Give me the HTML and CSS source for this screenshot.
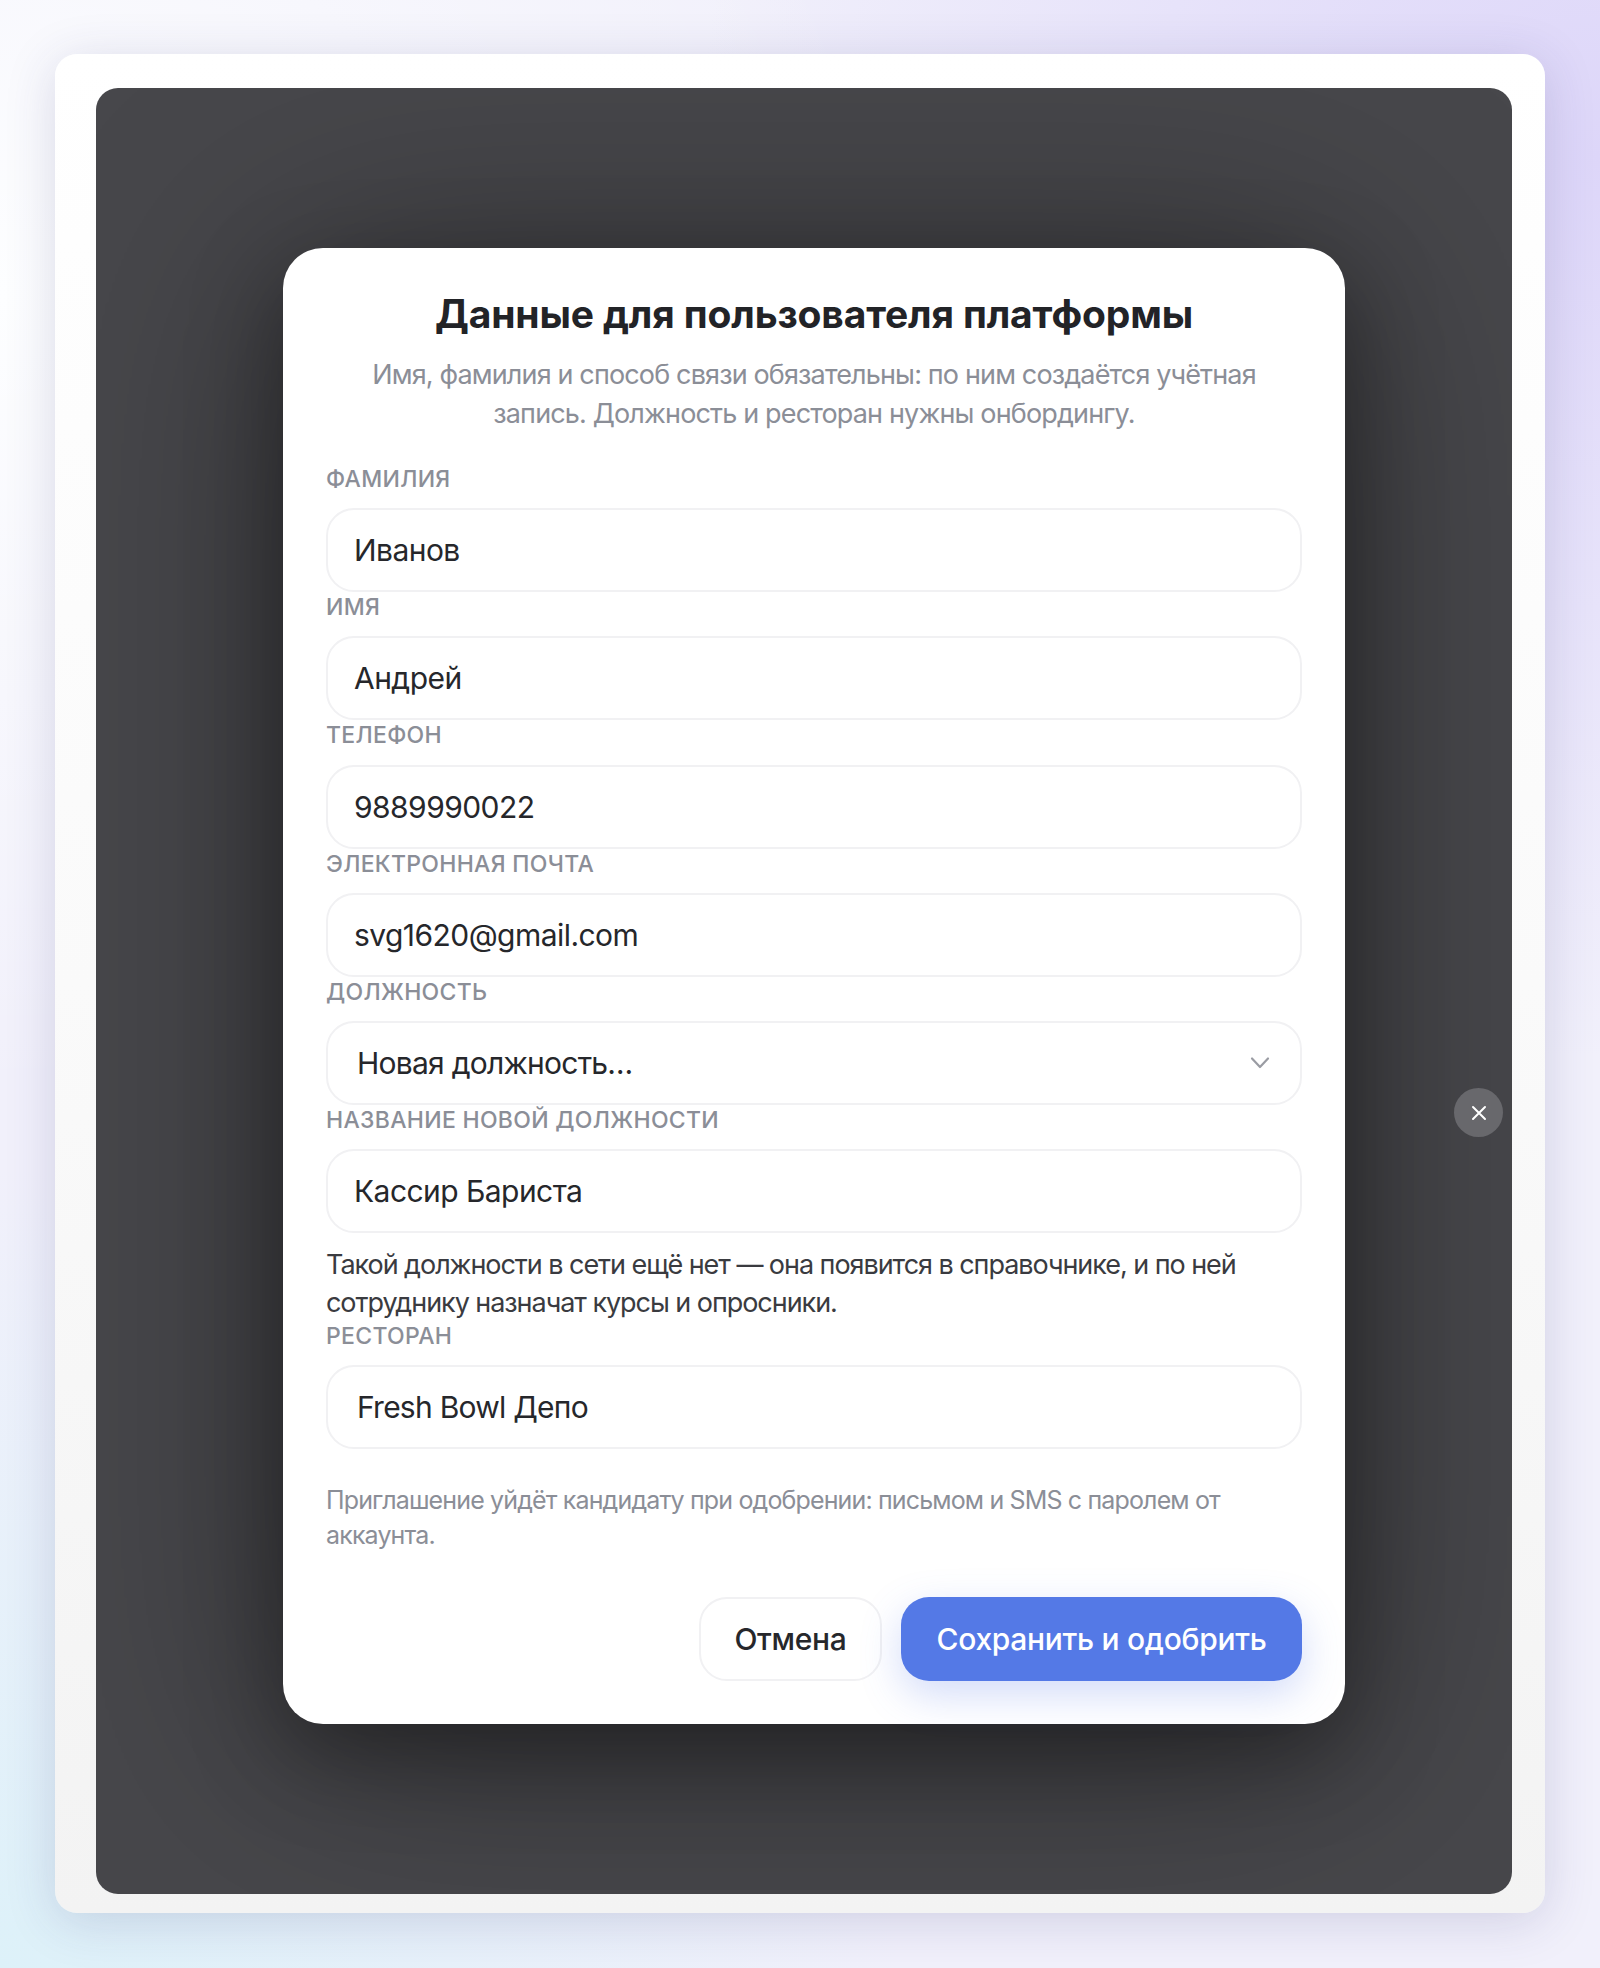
FILE: index.html
```html
<!DOCTYPE html>
<html lang="ru">

<head>
    <meta charset="UTF-8">
    <meta name="viewport" content="width=device-width, initial-scale=1.0">
    <title>Данные для пользователя платформы</title>
    <link rel="stylesheet" href="styles.css">
</head>

<body>
    <div class="card">
        <div class="overlay">
            <div class="modal">
                <h1>Данные для пользователя платформы</h1>
                <p class="lead">Имя, фамилия и способ связи обязательны: по ним создаётся учётная запись. Должность и ресторан нужны онбордингу.</p>

                <div class="label">Фамилия</div>
                <div class="field">Иванов</div>
                <div class="label">Имя</div>
                <div class="field">Андрей</div>
                <div class="label">Телефон</div>
                <div class="field">9889990022</div>
                <div class="label">Электронная почта</div>
                <div class="field">svg1620@gmail.com</div>
                <div class="label">Должность</div>
                <div class="field select">
                    Новая должность…
                    <svg class="chevron" viewBox="0 0 20 20" width="20" height="20" fill="none" stroke="#9a9ca3" stroke-width="2.2" stroke-linecap="round" stroke-linejoin="round">
                        <path d="M2 5.5l8 8.5 8-8.5" />
                    </svg>
                </div>
                <div class="label">Название новой должности</div>
                <div class="field">Кассир Бариста</div>
                <p class="hint">Такой должности в сети ещё нет — она появится в справочнике, и по ней сотруднику назначат курсы и опросники.</p>
                <div class="label">Ресторан</div>
                <div class="field select">Fresh Bowl Депо</div>
                <p class="note">Приглашение уйдёт кандидату при одобрении: письмом и SMS с паролем от аккаунта.</p>

                <div class="actions">
                    <button class="btn cancel">Отмена</button>
                    <button class="btn save">Сохранить и одобрить</button>
                </div>
            </div>

            <button class="close">
                <svg viewBox="0 0 20 20" width="20" height="20" fill="none" stroke="#ffffff" stroke-width="2" stroke-linecap="round">
                    <path d="M4 4l12 12M16 4L4 16" />
                </svg>
            </button>
        </div>
    </div>
</body>

</html>
```

FILE: styles.css
```css
* {
    margin: 0px;
    padding: 0px;
    box-sizing: border-box;
}

body {
    height: 1968px;
    padding: 54px 55px;
    font-family: Inter, "Noto Sans", sans-serif;
    color: #26272b;
    background-color: #f1f0fb;
    background-image:
        radial-gradient(900px 900px at 100% 8%, #ddd6f9 0%, rgba(221, 214, 249, 0) 100%),
        radial-gradient(900px 800px at 0% 100%, #ddf1f9 0%, rgba(221, 241, 249, 0) 100%),
        radial-gradient(900px 800px at 0% 15%, #fdfeff 0%, rgba(253, 254, 255, 0) 100%);
}

.card {
    height: 1859px;
    padding: 34px 33px 19px 41px;
    border-radius: 22px;
    background: linear-gradient(180deg, #ffffff 0%, #fafafa 50%, #f3f3f3 100%);
    box-shadow: 0 8px 50px rgba(50, 50, 110, 0.17);
}

.overlay {
    position: relative;
    height: 1806px;
    padding: 160px 167px 0 187px;
    border-radius: 22px;
    background-color: #47474b;
    overflow: hidden;
}

.modal {
    height: 1476px;
    padding: 40px 43px 0;
    border-radius: 40px;
    background-color: #ffffff;
    box-shadow: 0 30px 90px rgba(0, 0, 0, 0.35), 0 20px 240px rgba(0, 0, 0, 0.4);
}

h1 {
    font-size: 39px;
    line-height: 52px;
    font-weight: 700;
    letter-spacing: -0.15px;
    text-align: center;
    color: #222327;
}

.lead {
    margin-top: 15px;
    padding: 0 30px;
    font-size: 27px;
    line-height: 39px;
    letter-spacing: -0.85px;
    text-align: center;
    color: #8b8e97;
}

.lead + .label {
    margin-top: 31px;
}

.label {
    height: 30px;
    margin-bottom: 14.2px;
    font-size: 23px;
    line-height: 30px;
    font-weight: 500;
    letter-spacing: 0.3px;
    text-transform: uppercase;
    color: #8b8e97;
}

.field {
    position: relative;
    display: flex;
    align-items: center;
    height: 84px;
    padding: 0 26px;
    font-size: 30px;
    letter-spacing: -0.55px;
    border: 2px solid #f1f1f3;
    border-radius: 28px;
    background-color: #ffffff;
}

.select {
    padding-left: 29px;
    letter-spacing: -0.75px;
}

.chevron {
    position: absolute;
    right: 30px;
    top: 30px;
}

.hint {
    margin-top: 13px;
    font-size: 27px;
    line-height: 37.5px;
    letter-spacing: -1.05px;
    color: #3a3b40;
}

.note {
    margin-top: 34px;
    font-size: 25px;
    line-height: 35px;
    letter-spacing: -0.85px;
    color: #8b8e97;
}

.actions {
    display: flex;
    justify-content: flex-end;
    gap: 19px;
    margin-top: 44px;
}

.btn {
    height: 84px;
    font-family: inherit;
    font-size: 30px;
    font-weight: 500;
    letter-spacing: -0.3px;
    border-radius: 28px;
}

.cancel {
    width: 183px;
    color: #26272b;
    background-color: #ffffff;
    border: 2px solid #f1f1f3;
}

.save {
    width: 401px;
    color: #ffffff;
    background-color: #5479e6;
    border: none;
    box-shadow: 0 14px 40px rgba(84, 121, 230, 0.26);
}

.close {
    position: absolute;
    left: 1358px;
    top: 1000px;
    display: flex;
    align-items: center;
    justify-content: center;
    width: 49px;
    height: 49px;
    border: none;
    border-radius: 50%;
    background-color: #68686c;
}
```
